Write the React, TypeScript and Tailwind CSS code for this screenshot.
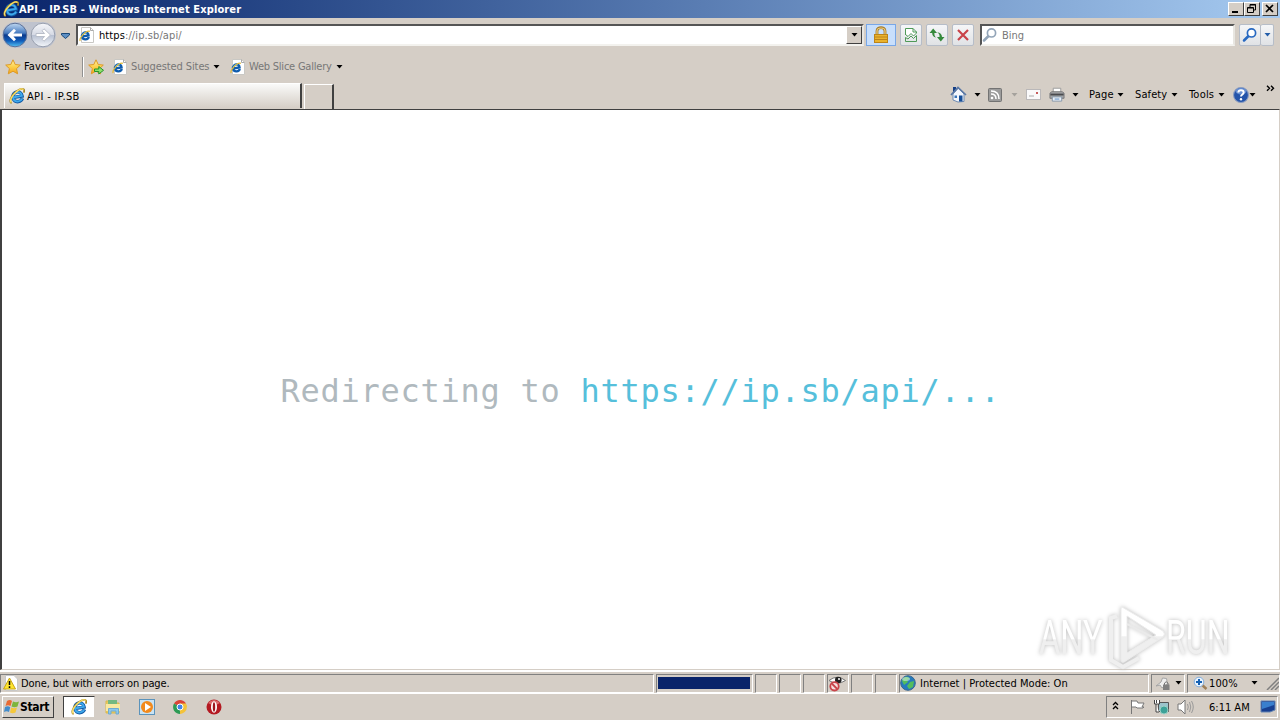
import React from 'react';

interface IconProps {
  size?: number;
}

const IeIcon: React.FC<IconProps> = ({ size = 16 }) => (
  <svg width={size} height={size} viewBox="0 0 16 16" fill="none" className="shrink-0">
    <g transform="rotate(-10 8 9)">
      <path d="M13.2 11.4C12.2 13 10.6 13.8 8.6 13.8C5.6 13.8 3.8 11.9 3.8 9C3.8 6 5.9 4 8.7 4C11.5 4 13.2 6 13.2 8.9H5" stroke="#125ba6" strokeWidth="3.4" />
      <path d="M12.7 11.5C11.9 12.9 10.5 13.6 8.6 13.6C5.8 13.6 4 11.8 4 9C4 6.2 6 4.3 8.7 4.3C11.3 4.3 12.9 6.1 13 8.7H5" stroke="#3fa9ec" strokeWidth="1.9" />
    </g>
    <path d="M2.6 15.2C.2 14 1.2 9.6 5.2 5.4C9 1.6 13.2 0 14.8 1.4C15.5 2.2 15.3 3.4 14.6 4.6" stroke="#a98a2b" strokeWidth="1.8" />
    <path d="M2.3 14.6C.6 13 2 9.2 5.8 5.4C9.6 1.7 13.2.3 14.5 1.6" stroke="#fbe06a" strokeWidth="1.3" />
  </svg>
);

const PageIcon: React.FC = () => (
  <svg width="16" height="16" viewBox="0 0 16 16" fill="none" className="shrink-0">
    <path d="M2.5.5H11.5L14.5 3.5V15.5H2.5Z" fill="#fff" stroke="#c9c8c4" />
    <path d="M11.5.5V3.5H14.5" stroke="#aaa" />
    <g transform="rotate(-10 6 9)">
      <path d="M9.6 10.6C8.4 13.2 3.4 13.1 3 9.7C2.6 6.4 6.2 4.6 8.3 6C9.5 6.8 9.8 7.7 9.6 9H3.8" stroke="#0f5cad" strokeWidth="2.4" />
      <path d="M3.1 9C3.2 6.6 6.4 5 8.3 6.2" stroke="#4fb0ea" strokeWidth="1.2" />
    </g>
    <path d="M1.2 14C-.3 11.5 6.5 3.2 10.9 4.3" stroke="#e2b937" strokeWidth="1.2" />
  </svg>
);

const StarIcon: React.FC<{ arrow?: boolean }> = ({ arrow }) => (
  <svg width="16" height="16" viewBox="0 0 16 16" className="shrink-0">
    <defs>
      <linearGradient id="star" x2="0" y2="1">
        <stop stopColor="#fff2a4" />
        <stop offset=".5" stopColor="#fdd04a" />
        <stop offset="1" stopColor="#f4a41c" />
      </linearGradient>
    </defs>
    <path d="M8 .8L10.2 5.5L15.3 6.1L11.5 9.6L12.6 14.8L8 12.2L3.3 14.8L4.4 9.6L.7 6.1L5.8 5.5Z" fill="url(#star)" stroke="#dd9a26" />
    {arrow && <path d="M6.5 10H10.8V7.5L15.5 11.3L10.8 15V12.5H6.5Z" fill="#8ee16b" stroke="#259329" />}
  </svg>
);

const LockIcon: React.FC = () => (
  <svg width="16" height="18" viewBox="0 0 16 18" fill="none">
    <path d="M4 9V5C4 .5 12 .5 12 5V9" stroke="#a47b2a" strokeWidth="2.8" />
    <path d="M4 9V5C4 1 12 1 12 5V9" stroke="#f0d082" strokeWidth="1.2" />
    <rect x="1.5" y="8.5" width="13" height="8" fill="#eab32d" stroke="#bc8419" />
    <path d="M2 11H14M2 13.5H14" stroke="#bc831b" />
  </svg>
);

const BrokenPageIcon: React.FC = () => (
  <svg width="14" height="16" viewBox="0 0 14 16" fill="none" stroke="#4f9a58">
    <path d="M1.5 8V1.5H9L12.5 5V6L9.5 9L7 6.5L4 9.5L1.5 7.5" fill="#fff" />
    <path d="M9 1.5V5H12.5M1.5 10.5L4 12L7 9L9.5 11.5L12.5 8.5V14.5H1.5Z" />
  </svg>
);

const RefreshIcon: React.FC = () => (
  <svg width="16" height="14" viewBox="0 0 16 14" fill="#358a3b">
    <path d="M4.2.5L.5 5H3.2C3.2 7.4 4.4 9 7 9.6C5.6 8.2 5.3 7 5.4 5H8Z" />
    <path d="M11.8 13.5L8 9H10.6C10.8 7 10 5.4 8.2 4.2C11.2 4.4 13 6.2 13 9H15.5Z" />
  </svg>
);

const SearchIcon: React.FC<{ color: string; fill?: string }> = ({ color, fill = '#fff' }) => (
  <svg width="16" height="16" viewBox="0 0 16 16" fill="none" stroke={color}>
    <path d="M6.5 9L2 13.5" strokeWidth="2.5" strokeLinecap="round" />
    <circle cx="9.5" cy="5.9" r="4.1" fill={fill} strokeWidth="1.7" />
  </svg>
);

const HomeIcon: React.FC = () => (
  <svg width="17" height="17" viewBox="0 0 17 17">
    <path d="M3 1H6V6H3Z" fill="#153e85" />
    <path d="M3 8L8.5 2L14 8V15.5L8 16L3 14Z" fill="#f3f6fc" stroke="#6f8bb2" />
    <path d="M1 9L8 1.5L16 9" fill="none" stroke="#5a78a5" strokeWidth="1.7" />
    <rect x="9" y="9.5" width="3.5" height="6" fill="#164e98" />
    <path d="M4.5 9.5H7V12H4.5Z" fill="#3975b8" />
  </svg>
);

const FeedIcon: React.FC = () => (
  <svg width="14" height="14" viewBox="0 0 14 14" fill="none">
    <rect x=".5" y=".5" width="13" height="13" rx="1" fill="#9b9b9b" stroke="#737373" />
    <circle cx="4" cy="10" r="1.3" fill="#fff" />
    <path d="M3 6C6 6 8 8 8 11M3 3C8 3 11 6 11 11" stroke="#fff" strokeWidth="1.5" />
  </svg>
);

const PrinterIcon: React.FC = () => (
  <svg width="16" height="16" viewBox="0 0 17 16">
    <path d="M4.5 6V.8H12.5V6" fill="#fff" stroke="#999" />
    <path d="M1 6L3 4.5H14L16 6V11.5H1Z" fill="#a5a6a8" stroke="#77787a" />
    <path d="M1.5 6.5H15.5V8.5H1.5Z" fill="#4a4b4e" />
    <path d="M3.5 10H13.5V14.5H3.5Z" fill="#e9f0f8" stroke="#8495a8" />
    <path d="M6 12.3H11" stroke="#5789c0" />
  </svg>
);

const HelpIcon: React.FC = () => (
  <svg width="16" height="16" viewBox="0 0 15 15">
    <circle cx="7.5" cy="7.5" r="7" fill="#2454aa" stroke="#8b9cc0" />
    <ellipse cx="7.5" cy="4" rx="5" ry="3" fill="#678fd2" />
    <path d="M5 5.2C5.2 2.2 10 2.4 10 5.2C10 7.2 7.5 6.8 7.5 9" fill="none" stroke="#fff" strokeWidth="1.8" />
    <circle cx="7.5" cy="11.5" r="1.1" fill="#fff" />
  </svg>
);

const NavArrow: React.FC<{ disabled?: boolean }> = ({ disabled }) => (
  <svg width="26" height="26" viewBox="0 0 26 26" className="shrink-0">
    <defs>
      <linearGradient id="navBlue" x2="0" y2="1">
        <stop stopColor="#c1d9f1" />
        <stop offset=".42" stopColor="#467bc0" />
        <stop offset=".5" stopColor="#0b3a8c" />
        <stop offset=".75" stopColor="#0f5cba" />
        <stop offset="1" stopColor="#56c4f5" />
      </linearGradient>
      <linearGradient id="navGray" x2="0" y2="1">
        <stop stopColor="#f6f7fa" />
        <stop offset=".48" stopColor="#d6dae5" />
        <stop offset=".5" stopColor="#b6bfd1" />
        <stop offset="1" stopColor="#f4f7fb" />
      </linearGradient>
    </defs>
    <circle cx="13" cy="13" r="11.8" fill={disabled ? 'url(#navGray)' : 'url(#navBlue)'} stroke={disabled ? '#989fae' : '#5b7098'} />
    <path
      d="M5.5 13L12 6.8L14 8.8L11.4 11.5H20V14.5H11.4L14 17.2L12 19.2Z"
      fill="#fff"
      stroke={disabled ? '#b9bec9' : 'none'}
      transform={disabled ? 'rotate(180 13 13)' : undefined}
    />
  </svg>
);

const Caret: React.FC<{ color?: string }> = ({ color = '#000' }) => (
  <svg width="7" height="4" viewBox="0 0 7 4" className="shrink-0">
    <path d="M.5 0H6.5L3.5 3.5Z" fill={color} />
  </svg>
);

const WindowButton: React.FC<{ children: React.ReactNode }> = ({ children }) => (
  <div className="w-4 h-[14px] bg-[#d5cec6] border border-t-white border-l-white border-r-[#404040] border-b-[#404040]">
    <svg width="14" height="12" viewBox="0 0 14 12" fill="none" stroke="#000">{children}</svg>
  </div>
);

const TitleBar: React.FC = () => (
  <div className="h-[18px] shrink-0 flex items-center pl-[3px] pr-[2px] bg-linear-to-r from-[#0a246a] to-[#a6caf0]">
    <IeIcon />
    <span className="flex-1 pt-px text-white font-bold tracking-[0.12px]">API - IP.SB - Windows Internet Explorer</span>
    <WindowButton><path d="M3 9H9" strokeWidth="2" /></WindowButton>
    <WindowButton><path d="M5 4V1.5H10.5V7H8.5M5 2H11M2.5 4.5H8.5V9.5H2.5ZM2.5 5H8.5" /></WindowButton>
    <div className="w-[2px]" />
    <WindowButton><path d="M3 2L10 9M10 2L3 9" strokeWidth="1.7" /></WindowButton>
  </div>
);

const toolButton = 'h-[22px] flex items-center justify-center border border-[#b6bdc8] rounded-xs bg-linear-to-b from-[#f5f6f8] to-[#e0e2e5]';
const sunken = 'border-2 border-t-[#555] border-l-[#555] border-r-[#e8e6e1] border-b-[#f3f2ee]';

const AddressBar: React.FC = () => (
  <div className="h-8 shrink-0 flex items-center pl-[2px]">
    <div className="flex items-center rounded-full bg-[#bfc3ce] mt-[2px]">
      <NavArrow />
      <div className="w-[2px]" />
      <NavArrow disabled />
    </div>
    <div className="w-[18px] flex justify-center pt-1">
      <svg width="9" height="6" viewBox="0 0 9 6"><path d="M.5.5H8.5V2L4.5 5.5L.5 2Z" fill="#5c8fc4" stroke="#194878" /></svg>
    </div>
    <div className={`w-[788px] h-[22px] mt-[2px] ml-[2px] bg-white flex items-center pl-px ${sunken}`}>
      <PageIcon />
      <span className="flex-1 pl-1 pt-[2px] text-[#777] tracking-[0.1px]"><span className="text-black">https</span>://ip.sb/api/</span>
      <div className="w-4 h-[18px] flex items-center justify-center bg-[#d5cec6] border border-t-white border-l-white border-r-[#404040] border-b-[#404040]"><Caret /></div>
    </div>
    <div className="w-[30px] h-[22px] ml-[2px] mt-[2px] flex items-center justify-center border border-[#78a7e7] bg-[#c8dffc]"><LockIcon /></div>
    <div className={`w-[22px] ml-1 mt-[2px] ${toolButton}`}><BrokenPageIcon /></div>
    <div className={`w-[22px] ml-1 mt-[2px] ${toolButton}`}><RefreshIcon /></div>
    <div className={`w-[22px] ml-1 mt-[2px] ${toolButton}`}>
      <svg width="12" height="12" viewBox="0 0 12 12"><path d="M1 1L11 11M11 1L1 11" stroke="#c94249" strokeWidth="2.2" /></svg>
    </div>
    <div className={`w-[255px] h-[22px] ml-[6px] mt-[2px] bg-white flex items-center ${sunken}`}>
      <SearchIcon color="#93a5b8" />
      <span className="pl-1 pt-[2px] text-[#777]">Bing</span>
    </div>
    <div className={`w-[22px] ml-1 mt-[2px] ${toolButton}`}><SearchIcon color="#2869c1" /></div>
    <div className={`w-[13px] mt-[2px] border-l-0 ${toolButton}`}><Caret color="#245eaa" /></div>
  </div>
);

const FavoritesBar: React.FC = () => (
  <div className="h-[33px] shrink-0 flex items-center pl-[5px]">
    <StarIcon />
    <span className="w-[58px] pl-[3px] tracking-[0.1px]">Favorites</span>
    <div className="w-px h-5 ml-[3px] bg-[#909090]" />
    <div className="w-px h-5 mr-1 bg-white" />
    <StarIcon arrow />
    <div className="w-2" />
    <PageIcon />
    <span className="w-[85px] pl-[3px] pt-px text-[#777] tracking-[-0.1px]">Suggested Sites</span>
    <Caret />
    <div className="w-[10px]" />
    <PageIcon />
    <span className="w-[90px] pl-[3px] pt-px text-[#777] tracking-[-0.22px]">Web Slice Gallery</span>
    <Caret />
  </div>
);

const TabRow: React.FC = () => (
  <div className="h-[26px] shrink-0 flex">
    <div className="w-[298px] h-[25px] ml-1 flex items-center pl-1 border-t border-l border-white border-r-2 border-r-[#404040] bg-linear-to-b from-[#fafaf9] to-[#d5cec6]">
      <IeIcon />
      <span className="pl-[2px] pt-px tracking-[0.35px]">API - IP.SB</span>
    </div>
    <div className="w-[30px] h-[25px] mt-px ml-[2px] border-t border-l border-white border-r-2 border-r-[#404040]" />
    <div className="flex-1" />
    <div className="w-[330px] flex items-center pb-[3px]">
      <HomeIcon />
      <div className="w-[21px] flex justify-center"><Caret /></div>
      <FeedIcon />
      <div className="w-[24px] flex justify-center"><Caret color="#a5a29d" /></div>
      <svg width="15" height="11" viewBox="0 0 15 11"><rect x=".5" y=".5" width="14" height="10" fill="#faf9fa" stroke="#bab8b9" /><path d="M10 3H12V5H10Z" fill="#c75c5c" /><path d="M3 7H8" stroke="#aaa" /></svg>
      <div className="w-[8px]" />
      <PrinterIcon />
      <div className="w-[21px] flex justify-center"><Caret /></div>
      <span className="w-[28px] ml-[3px] tracking-[0.2px]">Page</span><Caret />
      <span className="w-[36px] ml-[11px] tracking-[0.1px]">Safety</span><Caret />
      <span className="w-[29px] ml-[11px] tracking-[0.2px]">Tools</span><Caret />
      <div className="w-2" />
      <HelpIcon />
      <Caret />
      <svg width="9" height="7" viewBox="0 0 9 7" fill="none" stroke="#000" strokeWidth="1.4" className="ml-[10px] mb-3"><path d="M1 .7L3.5 3.2L1 5.7M5 .7L7.5 3.2L5 5.7" /></svg>
    </div>
  </div>
);

// Embossed play logo in the corner of the document
const Watermark: React.FC = () => (
  <div className="absolute right-[33px] -bottom-[7px] w-[214px] h-[74px]">
    <svg width="214" height="74" viewBox="-4 -4 214 74" className="drop-shadow-[0_0_2px_#bbb]">
      <defs>
        <linearGradient id="mark" x2="0" y2="1">
          <stop offset=".52" stopColor="#fff" />
          <stop offset=".54" stopColor="#efefef" />
        </linearGradient>
      </defs>
      <g fill="url(#mark)" fontFamily="Roboto, sans-serif" fontSize="48">
        <text transform="translate(3 48) scale(.68 1)">ANY</text>
        <text transform="translate(130 48) scale(.67 1)">RUN</text>
      </g>
      <path d="M81 10L75 12V54L87 61L103 52" fill="none" stroke="#efefef" strokeWidth="4" />
      <path d="M86 1L127 25Q130 28 127 31L88 56Q85 57 85 53V3Q85 1 86 1ZM91 10V47L120 29Z" fill="url(#mark)" stroke="#ececec" fillRule="evenodd" />
      <path d="M91 18L122 34" fill="none" stroke="#eaeaea" strokeWidth="2" />
    </svg>
  </div>
);

const Document: React.FC = () => (
  <div className="relative h-[561px] shrink-0 bg-white border-t border-l-2 border-r border-b border-[#404040] border-r-[#d5cec6] border-b-[#d5cec6] flex items-center justify-center">
    <p className="w-[720px] pt-[2px] whitespace-pre text-[32px] leading-[42px] tracking-[0.735px] text-[#b0b9be] font-['DejaVu_Sans_Mono','Liberation_Mono',monospace]">
      Redirecting to <span className="text-[#56bfdb]">https://ip.sb/api/...</span>
    </p>
    <Watermark />
  </div>
);

const cell = 'h-[19px] border-t border-l border-t-[#808080] border-l-[#808080] border-r border-b border-r-white border-b-white flex items-center';

const StatusBar: React.FC = () => (
  <div className="h-[23px] shrink-0 flex items-center gap-[2px] border-t-2 border-white pt-px">
    <div className={`w-[654px] pl-[2px] ${cell}`}>
      <svg width="16" height="16" viewBox="0 0 16 16">
        <path d="M2.5.5H11L14.5 4V15.5H2.5Z" fill="#fff" stroke="#c8c8c8" />
        <path d="M6.5 3L12.5 14H.5Z" fill="#ffe52e" stroke="#c7a416" />
        <path d="M6.5 6V10M6.5 11.3V13" stroke="#000" strokeWidth="1.5" />
      </svg>
      <span className="pl-[2px] pt-px tracking-[-0.1px]">Done, but with errors on page.</span>
    </div>
    <div className={`w-[97px] pl-px ${cell}`}><div className="w-[92px] h-3 bg-[#0a246a]" /></div>
    <div className={`w-[22px] ${cell}`} />
    <div className={`w-[22px] ${cell}`} />
    <div className={`w-[22px] ${cell}`} />
    <div className={`w-[22px] ${cell}`}>
      <svg width="18" height="17" viewBox="0 0 18 17" fill="none" className="shrink-0">
        <path d="M1 5.5Q9-1 17.5 5.5Q9 11 1 5.5Z" fill="#fff" stroke="#777" />
        <circle cx="10.3" cy="5" r="3.3" fill="#222" />
        <circle cx="11" cy="4" r="1" fill="#fff" />
        <circle cx="6.5" cy="11.3" r="4.2" fill="#f6dede" stroke="#c9444a" strokeWidth="1.8" />
        <path d="M3.7 8.5L9.3 14" stroke="#c9444a" strokeWidth="1.8" />
      </svg>
    </div>
    <div className={`w-[22px] ${cell}`} />
    <div className={`w-[22px] ${cell}`} />
    <div className={`w-[250px] ${cell}`}>
      <svg width="16" height="16" viewBox="0 0 16 16">
        <circle cx="8" cy="8" r="7.3" fill="#267bbd" stroke="#38658e" />
        <path d="M2 6Q4 1 8 2L10 4L7 5L8 7L4 10ZM10 7L14 6L13 12L9 14L7 11Z" fill="#54bd5c" />
        <ellipse cx="6" cy="4" rx="4" ry="2" fill="#e1f6f4" opacity=".5" />
      </svg>
      <span className="pl-[4px] pt-px tracking-[0.03px]">Internet | Protected Mode: On</span>
    </div>
    <div className={`w-[34px] pl-[3px] ${cell}`}>
      <svg width="17" height="15" viewBox="0 0 17 15">
        <path d="M1 10L6 6L7.5 2L11.5 2.5L12.5 8L7 12L5 9Z" fill="#eee" stroke="#a5a5a5" />
        <path d="M9.5 9V7Q11.2 4.5 13 7V9" fill="none" stroke="#777" />
        <rect x="8" y="8.5" width="6.5" height="5.5" fill="#808080" />
      </svg>
      <div className="ml-[3px]"><Caret /></div>
    </div>
    <div className={`flex-1 pl-[5px] ${cell}`}>
      <svg width="15" height="15" viewBox="0 0 15 15" fill="none"><path d="M8 8L13.5 13" stroke="#a08058" strokeWidth="2.5" /><circle cx="6" cy="6" r="4.8" fill="#e9f3fd" stroke="#86aeda" /><path d="M6 3V9M3 6H9" stroke="#1762b4" strokeWidth="2" /></svg>
      <span className="w-[43px] pl-px pt-px tracking-[0.1px]">100%</span>
      <Caret />
      <svg width="14" height="14" viewBox="0 0 14 14" stroke="#808080" className="ml-auto"><path d="M2 14L14 2M6 14L14 6M10 14L14 10" strokeWidth="1.5" /></svg>
    </div>
  </div>
);

const Taskbar: React.FC = () => (
  <div className="flex-1 flex items-center border-t border-white pl-[2px]">
    <div className="w-[52px] h-[22px] flex items-center pl-px border border-t-white border-l-white border-r-[#404040] border-b-[#404040]">
      <svg width="16" height="16" viewBox="0 0 16 16">
        <path d="M3 2Q6 0 8 2L6.5 7Q4 5.5 1.5 7Z" fill="#e96a33" />
        <path d="M9 2.5Q12 4 15 2.5L13.5 7.5Q10.5 9 7.5 7.5Z" fill="#7db53d" />
        <path d="M1 8Q4 6.5 6.2 8.2L5 13Q2.5 11.5 0 13Z" fill="#438ccb" />
        <path d="M7.2 8.6Q10 10 13 8.6L11.5 13.5Q8.5 15 6 13.5Z" fill="#f5c73a" />
      </svg>
      <span className="font-bold text-[12px] tracking-[-0.35px]">Start</span>
    </div>
    <div className="w-8 h-[22px] ml-[9px] flex items-center justify-center bg-white border border-t-[#404040] border-l-[#404040] border-r-[#d5cec6] border-b-[#d5cec6]"><IeIcon /></div>
    <svg width="16" height="16" viewBox="0 0 16 16" className="ml-[10px]">
      <path d="M1 2H6L8 4H14V14H1Z" fill="#e9c95f" stroke="#d9b94d" />
      <path d="M3 1H12V5H3Z" fill="#75b981" /><path d="M1 5H15V12H1Z" fill="#f9e9a2" />
      <path d="M3.5 15V9.5H13.5V15H11V12H6V15Z" fill="#8cc8ed" stroke="#6fabd2" />
    </svg>
    <svg width="16" height="16" viewBox="0 0 16 16" className="ml-[18px]">
      <rect x=".5" y=".5" width="15" height="15" fill="#c9e3f4" stroke="#5b93bb" />
      <circle cx="8" cy="8" r="6" fill="#f28a1d" /><path d="M6 4V12L12 8Z" fill="#fff" />
    </svg>
    <svg width="14" height="14" viewBox="0 0 14 14" className="ml-[18px]">
      <path d="M7 7L1 3.5A7 7 0 0 1 13 3.5Z" fill="#db4437" />
      <path d="M7 7H13.9A7 7 0 0 1 6.5 14Z" fill="#f4c339" /><path d="M7 3.5H13A7 7 0 0 1 14 7H7Z" fill="#f4c339" />
      <path d="M7 7L7 14A7 7 0 0 1 1 3.5Z" fill="#2e9b55" />
      <circle cx="7" cy="7" r="3" fill="#4285e8" stroke="#fff" />
    </svg>
    <svg width="16" height="16" viewBox="0 0 16 16" className="ml-[19px]">
      <circle cx="8" cy="8" r="7.5" fill="#b41921" /><path d="M2 4Q8-2 14 4L8 7Z" fill="#dc6a6c" />
      <ellipse cx="8" cy="8" rx="3" ry="5.7" fill="#fff" /><ellipse cx="8" cy="8" rx="1.2" ry="4.7" fill="#9d151c" />
    </svg>
    <div className="ml-auto w-[172px] mr-[2px] h-[22px] flex items-center pl-[5px] border border-t-[#808080] border-l-[#808080] border-r-white border-b-white">
      <svg width="7" height="9" viewBox="0 0 7 9" fill="none" stroke="#000" strokeWidth="1.3" className="mb-[3px]"><path d="M1 4L3.5 1.5L6 4M1 8L3.5 5.5L6 8" /></svg>
      <svg width="16" height="16" viewBox="0 0 16 16" className="ml-[10px]"><path d="M2.5 1V15M3 2H8L9 4H15L13 8H15L14 9H8L7 8H3" fill="#fff" stroke="#777" /></svg>
      <svg width="16" height="16" viewBox="0 0 16 16" className="ml-[8px]"><path d="M5.5 3.5H15.5V12.5H5.5Z" fill="#9cc4cc" stroke="#555" /><path d="M1.5 1V5H6.5V1M3 5V13H6M3.5 1V4" fill="#fff" stroke="#444" /><circle cx="11" cy="11" r="4" fill="#3da298" stroke="#9fd0c6" /></svg>
      <svg width="17" height="16" viewBox="0 0 17 16" className="ml-[8px]"><path d="M1 5H4L8 1V15L4 11H1Z" fill="#fff" stroke="#777" /><path d="M10.5 5Q12 8 10.5 11M12.5 3Q15 8 12.5 13M14.5 2Q18 8 14.5 14" fill="none" stroke="#999" /></svg>
      <span className="ml-[15px] w-[51px] pt-px">6:11 AM</span>
      <svg width="16" height="14" viewBox="0 0 16 14"><path d="M1 1H15V10L10 12H1Z" fill="#173f91" stroke="#6685b3" /><path d="M2 2H14V5L2 9Z" fill="#397fce" /></svg>
    </div>
  </div>
);

export default function App() {
  return (
    <div className="w-[1280px] h-[720px] overflow-hidden flex flex-col bg-[#d5cec6] text-[11px] leading-[14px] text-black whitespace-nowrap font-['DejaVu_Sans_Condensed','DejaVu_Sans',sans-serif]">
      <TitleBar />
      <AddressBar />
      <FavoritesBar />
      <TabRow />
      <Document />
      <StatusBar />
      <Taskbar />
    </div>
  );
}
